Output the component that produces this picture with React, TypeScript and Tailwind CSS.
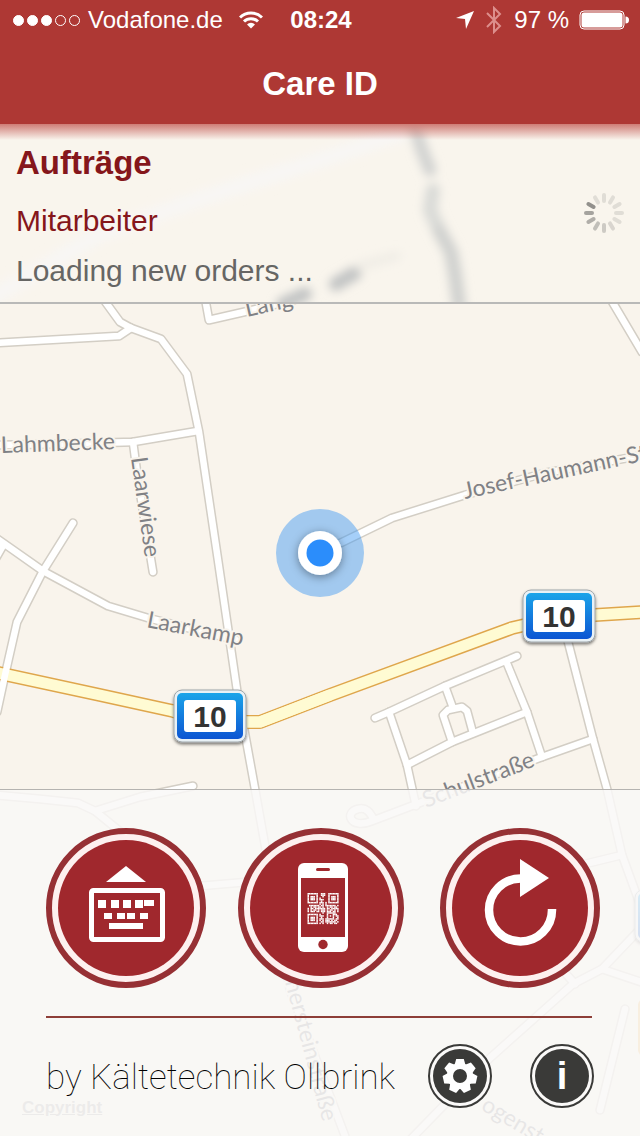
import { ReactNode } from 'react';

interface MapLabel {
  id: number;
  text: string;
  x: number;
  y: number;
  angle: number;
}

interface Shield {
  id: number;
  x: number;
  y: number;
  value: string;
}

const streets = [
  'M104 300 L120 322 L131 328 L161 339 L187 374 L199 432 L218 560 L237 690 L255 789 L268 862 L290 990 L345 1136',
  'M-4 343 L119 336 L131 328',
  'M205 298 L209 320 L244 312 L310 296',
  'M610 298 L642 352',
  'M-4 445 L60 444 L133 442 L198 431',
  'M133 442 L138 480 L153 572',
  'M-4 538 L43 571 L108 606 L148 618 L236 640',
  'M4 544 L-4 558',
  'M73 523 L43 571 L17 622 L5 675 L-3 712',
  'M320 553 L392 518 L465 495 L545 473 L644 455',
  'M566 634 L593 739 L607 789 L622 855 L644 915',
  'M375 718 L389 712 L445 686 L517 656',
  'M389 712 L407 765 L416 806',
  'M407 765 L452 742 L527 712',
  'M506 661 L527 712 L542 757',
  'M445 686 L453 708',
  'M452 742 L443 715 L448 710 L462 707 L467 711 L473 733',
  'M593 739 L542 757 L430 799 L372 821 C350 830 344 812 358 809 C366 807 370 812 374 820',
  'M-4 795 L40 799 L78 803 L95 811 L150 856',
  'M95 811 L140 797 L193 786',
  'M200 886 L270 880',
  'M585 864 L622 855',
  'M644 925 L602 969 L573 984 L490 1058 L410 1140',
  'M602 969 L644 983',
  'M566 974 L575 984',
  'M625 1009 L600 1110',
];

const highway = 'M-6 672 L100 695 L173 711 L215 722 L260 722 L330 695 L512 628 L525 625 L595 615 L646 612';

const labels: MapLabel[] = [
  { id: 1, text: 'Lang', x: 247, y: 317, angle: -13 },
  { id: 2, text: 'Lahmbecke', x: 1, y: 453, angle: -2 },
  { id: 3, text: 'Laarwiese', x: 131, y: 458, angle: 82 },
  { id: 4, text: 'Laarkamp', x: 146, y: 627, angle: 11 },
  { id: 5, text: 'Josef-Haumann-St', x: 465, y: 499, angle: -12 },
  { id: 6, text: 'Schulstraße', x: 426, y: 808, angle: -21 },
  { id: 7, text: 'nersteinstraße', x: 285, y: 982, angle: 75 },
  { id: 8, text: 'ogenst', x: 480, y: 1109, angle: 31 },
];

const shields: Shield[] = [
  { id: 1, x: 174, y: 690, value: '10' },
  { id: 2, x: 523, y: 590, value: '10' },
  { id: 3, x: 635, y: 890, value: '' },
];

const StreetMap = () => (
  <svg
    className="absolute inset-0 h-full w-full"
    viewBox="0 0 640 1136"
    preserveAspectRatio="xMidYMid slice"
    aria-hidden="true"
  >
    <defs>
      <linearGradient id="shield" x1="0" y1="0" x2="0" y2="1">
        <stop offset="0" stopColor="#1ba4e9" />
        <stop offset="1" stopColor="#0c55d2" />
      </linearGradient>
      <filter id="drop" x="-30%" y="-30%" width="160%" height="160%">
        <feDropShadow dx="0" dy="2" stdDeviation="1.5" floodOpacity="0.5" />
      </filter>
      <filter id="glow" x="-50%" y="-50%" width="200%" height="200%">
        <feDropShadow dx="0" dy="2" stdDeviation="5" floodOpacity="0.4" />
      </filter>
    </defs>
    <g fill="none" strokeLinecap="round" strokeLinejoin="round">
      {streets.map((d) => (
        <path key={d} d={d} stroke="#d3cec5" strokeWidth="9.500" />
      ))}
      <path d={highway} stroke="#dfa64c" strokeWidth="14" />
      <path d={highway} stroke="#fffbd3" strokeWidth="11" />
      {streets.map((d) => (
        <path key={d} d={d} stroke="#ffffff" strokeWidth="6.500" />
      ))}
      <path d="M173 711 L215 722 L260 722 L330 695" stroke="#fffbd3" strokeWidth="11" />
      <path d="M644 1005 L644 1050" stroke="#f0b95c" strokeWidth="12" />
    </g>
    <g className="font-['Lato','Noto_Sans',sans-serif]" fontSize="23" fill="#808185" stroke="#f9f4ec" strokeWidth="4" strokeLinejoin="round">
      {labels.map((label) => (
        <text key={label.id} paintOrder="stroke" transform={`translate(${label.x} ${label.y}) rotate(${label.angle})`}>
          {label.text}
        </text>
      ))}
    </g>
    {shields.map((shield) => (
      <g key={shield.id} transform={`translate(${shield.x} ${shield.y})`}>
        <rect width="72" height="52" rx="8" fill="#e9f1f6" stroke="#9fa6aa" filter="url(#drop)" />
        <rect x="3" y="3" width="66" height="46" rx="5" fill="url(#shield)" />
        <rect x="10" y="10" width="52" height="32" rx="3" fill="#ffffff" />
        <text
          x="36"
          y="37"
          textAnchor="middle"
          className="font-['Liberation_Sans',sans-serif] font-bold"
          fontSize="30"
          fill="#333333"
        >
          {shield.value}
        </text>
      </g>
    ))}
    <circle cx="320" cy="553" r="44" fill="#3b96f2" fillOpacity="0.46" />
    <circle cx="320" cy="553" r="22" fill="#ffffff" filter="url(#glow)" />
    <circle cx="320" cy="553" r="13.500" fill="#2b8dfb" />
  </svg>
);

const StatusBar = () => (
  <div className="grid h-10 grid-cols-[1fr_auto_1fr] items-center pr-[11px] pl-[13px] text-2xl">
    <div className="flex items-center">
      <div className="mr-2 flex gap-[3px]">
        {[true, true, true, false, false].map((filled, i) => (
          <span key={i} className={`h-[11px] w-[11px] rounded-full border border-white ${filled ? 'bg-white' : ''}`} />
        ))}
      </div>
      <span>Vodafone.de</span>
      <svg className="ml-4 h-5 w-6" viewBox="0 0 24 20" fill="none" stroke="#fff" strokeWidth="3" aria-label="WLAN">
        <path d="M1 7.5 A15.500 15.500 0 0 1 23 7.500" />
        <path d="M5 11.500 A10 10 0 0 1 19 11.500" />
        <path d="M12 18.500 L8 14.500 A5.600 5.600 0 0 1 16 14.500 Z" fill="#fff" stroke="none" />
      </svg>
    </div>
    <span className="font-bold">08:24</span>
    <div className="flex items-center justify-end">
      <svg className="mr-3 h-5 w-[18px]" viewBox="0 0 18 20" fill="#fff" aria-label="Ortung">
        <path d="M0 8 L18 1 L10 19 L9 9 Z" />
      </svg>
      <svg className="mr-3 h-7 w-4" viewBox="0 0 16 28" fill="none" stroke="#dd8f8c" strokeWidth="2" aria-label="Bluetooth">
        <path d="M1 7 L14 20 L8 26 V2 L14 8 L1 21" />
      </svg>
      <span>97 %</span>
      <svg className="ml-2.5 h-5 w-[50px]" viewBox="0 0 50 20" aria-label="Batterie">
        <rect x="1" y="1" width="44" height="18" rx="4" fill="none" stroke="#fff" />
        <rect x="2.500" y="2.500" width="41" height="15" rx="2.500" fill="#fff" />
        <path d="M46.500 6.500 Q50 6.500 50 10 Q50 13.500 46.500 13.500 Z" fill="#fff" />
      </svg>
    </div>
  </div>
);

const spokes = [0.12, 0.12, 0.12, 0.12, 0.12, 0.16, 0.22, 0.28, 0.36, 0.42, 0.52, 0.12];

const Spinner = () => (
  <svg className="h-10 w-10 shrink-0" viewBox="0 0 40 40" role="img" aria-label="Loading">
    {spokes.map((opacity, i) => (
      <rect key={i} x="18" width="4" height="10" rx="2" fill="#333" fillOpacity={opacity} transform={`rotate(${i * 30} 20 20)`} />
    ))}
  </svg>
);

const OrdersPanel = () => (
  <section className="relative overflow-hidden border-b-2 border-[#b9b9b8] bg-[#f9f5ed]">
    {/* Map shining through the frosted panel */}
    <svg
      className="absolute inset-0 h-full w-full"
      viewBox="0 0 640 178"
      preserveAspectRatio="xMidYMid slice"
      fill="none"
      strokeLinecap="round"
      aria-hidden="true"
    >
      <defs>
        <filter id="frost" x="-20%" y="-20%" width="140%" height="140%">
          <feGaussianBlur stdDeviation="5" />
        </filter>
      </defs>
      <g filter="url(#frost)">
        <path d="M-10 175 L100 110 L200 75 L400 10" stroke="#f8f6f4" strokeWidth="16" />
        <path d="M414 0 L422 26 L430 46" stroke="#d2d3d1" strokeWidth="13" />
        <path d="M433 66 L430 86 L440 108" stroke="#d9dad7" strokeWidth="14" />
        <path d="M440 108 L451 128 L455 150 L459 180" stroke="#d0d1cf" strokeWidth="14" />
        <path d="M283 180 L305 170" stroke="#c2c4c4" strokeWidth="14" />
        <path d="M336 160 L355 149" stroke="#c2c4c4" strokeWidth="14" />
        <path d="M360 142 L396 132" stroke="#f0ede6" strokeWidth="10" />
      </g>
    </svg>
    <div className="absolute inset-x-0 top-0 h-4 bg-gradient-to-b from-[#cf7d76] to-transparent" />
    <div className="relative flex items-center justify-between px-4 py-2.5">
      <div>
        <h2 className="text-[33px] leading-[58px] font-bold text-[#85161b]">Aufträge</h2>
        <p className="text-3xl leading-[58px] text-[#85161b]">Mitarbeiter</p>
        <p className="text-3xl leading-[42px] text-[#666664]">Loading new orders ...</p>
      </div>
      <Spinner />
    </div>
  </section>
);

interface RoundButtonProps {
  label: string;
  className?: string;
  children: ReactNode;
}

const RoundButton = ({ label, className = 'w-40', children }: RoundButtonProps) => (
  <button
    type="button"
    aria-label={label}
    className={`h-40 shrink-0 rounded-[50%] border-[6px] border-[#963034] bg-[#fdf0ef] p-1.5 ${className}`}
  >
    <span className="flex h-full w-full items-center justify-center rounded-[50%] bg-[#a0282d]">{children}</span>
  </button>
);

const SmallButton = ({ label, children }: RoundButtonProps) => (
  <button type="button" aria-label={label} className="h-16 w-16 rounded-full border-2 border-[#3a3a38] bg-[#fbfaf9] p-[3px]">
    <span className="flex h-full w-full items-center justify-center rounded-full bg-[#3a3a38] text-white">{children}</span>
  </button>
);

const KeyboardIcon = () => (
  <svg className="h-[136px] w-[136px]" viewBox="0 0 136 136" fill="#fff">
    <path d="M68 26 L88 42 H48 Z" />
    <rect x="33.500" y="50.500" width="71" height="49" rx="2" fill="none" stroke="#fff" strokeWidth="5" />
    <path d="M40 60h8v8h-8z M53 60h8v8h-8z M65 60h8v8h-8z M77 60h8v8h-8z M86 60h10v6h-10z" />
    <path d="M46 73h8v6h-8z M59 73h8v6h-8z M69 73h8v6h-8z M82 73h8v6h-8z M51 83h34v6h-34z" />
  </svg>
);

const QR_SIZE = 21;
const finders = [[0, 0], [14, 0], [0, 14]];

const isDark = (x: number, y: number) => {
  for (const [fx, fy] of finders) {
    const dx = Math.abs(x - fx - 3);
    const dy = Math.abs(y - fy - 3);
    const ring = Math.max(dx, dy);
    if (ring <= 4) return ring !== 2 && ring !== 4;
  }
  const align = Math.max(Math.abs(x - 15), Math.abs(y - 15));
  if (align <= 2) return align !== 1;
  return (x * x * 7 + y * y * 13 + x * y * 5 + x * 3) % 11 < 6;
};

const PhoneIcon = () => {
  const cells: ReactNode[] = [];
  for (let y = 0; y < QR_SIZE; y++) {
    for (let x = 0; x < QR_SIZE; x++) {
      if (isDark(x, y)) cells.push(<rect key={`${x}-${y}`} x={x} y={y} width="1.02" height="1.02" />);
    }
  }

  return (
    <svg className="h-[136px] w-[142px]" viewBox="0 0 142 136">
      <rect x="48" y="23" width="50" height="89" rx="6" fill="#fff" />
      <rect x="51" y="38" width="44" height="59" fill="#a0282d" />
      <rect x="66" y="28" width="14" height="3" rx="1.500" fill="#a0282d" />
      <circle cx="73" cy="104.500" r="4.700" fill="#a0282d" />
      <g fill="#fff" transform="translate(57.500 53) scale(1.480)">{cells}</g>
    </svg>
  );
};

const RefreshIcon = () => (
  <svg className="h-[136px] w-[136px]" viewBox="0 0 136 136">
    <path d="M70 38.500 H68.500 A31.500 31.500 0 1 0 100 70 V69" fill="none" stroke="#fff" strokeWidth="8.500" />
    <path d="M68 19 L97 38 L68 57 Z" fill="#fff" />
  </svg>
);

const GearIcon = () => (
  <svg className="h-9 w-9" viewBox="-18 -18 36 36" fill="#fff">
    <circle r="10" fill="none" stroke="#fff" strokeWidth="6" />
    {[0, 1, 2, 3, 4, 5, 6].map((i) => (
      <path key={i} d="M-5.500 -11 L-3.800 -17 H3.800 L5.500 -11 Z" transform={`rotate(${(i * 360) / 7})`} />
    ))}
  </svg>
);

const App = () => {
  return (
    <div className="relative flex min-h-screen flex-col overflow-hidden bg-[#f9f4ec] font-['Liberation_Sans',Arial,sans-serif]">
      <StreetMap />
      <a href="#copyright" className="absolute bottom-4 left-[22px] text-[17px] font-bold text-[#a0a0a0] underline">
        Copyright
      </a>

      <header className="relative bg-[#ae3834] text-white">
        <StatusBar />
        <h1 className="pt-1 text-center text-[33px] leading-20 font-bold">Care ID</h1>
      </header>

      <OrdersPanel />

      <div className="flex-1" />

      <footer className="relative border-t border-[#b5b3b0] bg-[#f9f8f7]/85 pt-[38px] pr-10 pb-7 pl-[46px]">
        <div className="flex gap-8">
          <RoundButton label="Tastatur">
            <KeyboardIcon />
          </RoundButton>
          <RoundButton label="QR-Code scannen" className="w-[166px]">
            <PhoneIcon />
          </RoundButton>
          <RoundButton label="Aktualisieren" className="ml-auto w-40">
            <RefreshIcon />
          </RoundButton>
        </div>
        <hr className="mt-7 mr-2 border-t-2 border-[#8e3f38]" />
        <div className="mt-[26px] mr-1.5 flex items-center justify-between">
          <p className="pt-1 font-['Roboto','Liberation_Sans',sans-serif] text-[35px] font-thin whitespace-nowrap text-black">
            by Kältetechnik Ollbrink
          </p>
          <div className="flex gap-[38px]">
            <SmallButton label="Einstellungen">
              <GearIcon />
            </SmallButton>
            <SmallButton label="Info">
              <span className="text-[38px] leading-none font-bold">i</span>
            </SmallButton>
          </div>
        </div>
      </footer>
    </div>
  );
};

export default App;
